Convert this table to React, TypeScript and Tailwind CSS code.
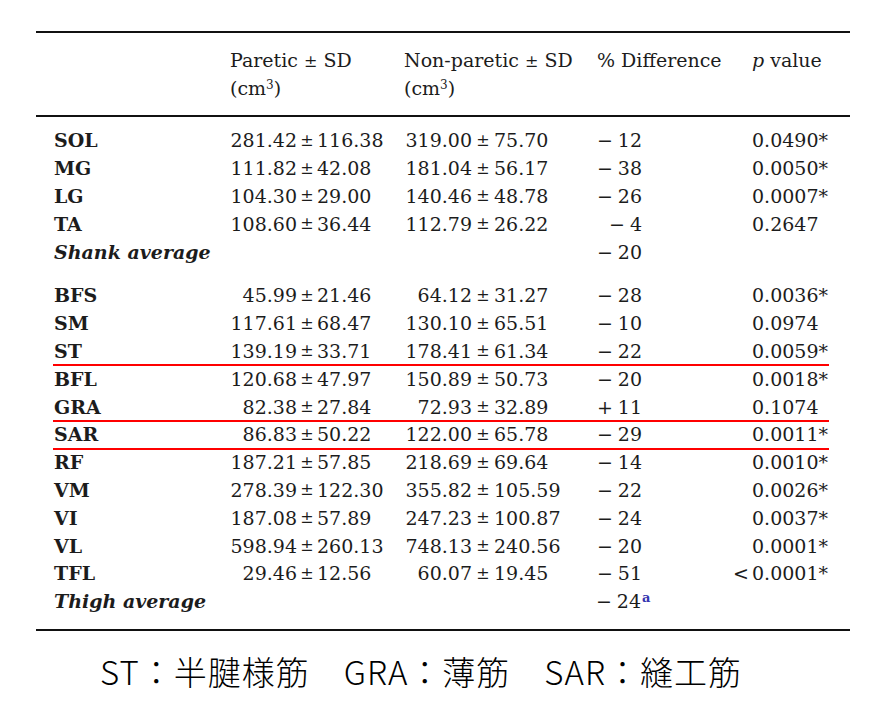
import React from "react";

type Row = {
  label: string;
  italic?: boolean;
  p?: [string, string];
  n?: [string, string];
  diff?: string;
  sup?: string;
  pv?: string;
  lt?: boolean;
};

const group1: Row[] = [
  { label: "SOL", p: ["281.42", "116.38"], n: ["319.00", "75.70"], diff: "−12", pv: "0.0490*" },
  { label: "MG", p: ["111.82", "42.08"], n: ["181.04", "56.17"], diff: "−38", pv: "0.0050*" },
  { label: "LG", p: ["104.30", "29.00"], n: ["140.46", "48.78"], diff: "−26", pv: "0.0007*" },
  { label: "TA", p: ["108.60", "36.44"], n: ["112.79", "26.22"], diff: "−4", pv: "0.2647" },
  { label: "Shank average", italic: true, diff: "−20" },
];

const groupA: Row[] = [
  { label: "BFS", p: ["45.99", "21.46"], n: ["64.12", "31.27"], diff: "−28", pv: "0.0036*" },
  { label: "SM", p: ["117.61", "68.47"], n: ["130.10", "65.51"], diff: "−10", pv: "0.0974" },
  { label: "ST", p: ["139.19", "33.71"], n: ["178.41", "61.34"], diff: "−22", pv: "0.0059*" },
];
const groupB: Row[] = [
  { label: "BFL", p: ["120.68", "47.97"], n: ["150.89", "50.73"], diff: "−20", pv: "0.0018*" },
  { label: "GRA", p: ["82.38", "27.84"], n: ["72.93", "32.89"], diff: "+11", pv: "0.1074" },
];
const groupC: Row[] = [
  { label: "SAR", p: ["86.83", "50.22"], n: ["122.00", "65.78"], diff: "−29", pv: "0.0011*" },
];
const groupD: Row[] = [
  { label: "RF", p: ["187.21", "57.85"], n: ["218.69", "69.64"], diff: "−14", pv: "0.0010*" },
  { label: "VM", p: ["278.39", "122.30"], n: ["355.82", "105.59"], diff: "−22", pv: "0.0026*" },
  { label: "VI", p: ["187.08", "57.89"], n: ["247.23", "100.87"], diff: "−24", pv: "0.0037*" },
  { label: "VL", p: ["598.94", "260.13"], n: ["748.13", "240.56"], diff: "−20", pv: "0.0001*" },
  { label: "TFL", p: ["29.46", "12.56"], n: ["60.07", "19.45"], diff: "−51", pv: "0.0001*", lt: true },
  { label: "Thigh average", italic: true, diff: "−24", sup: "a" },
];

function Diff({ v, sup }: { v: string; sup?: string }) {
  const sign = v.charAt(0);
  const num = v.slice(1);
  return (
    <div className="w-[62px] shrink-0 flex justify-end items-baseline whitespace-nowrap">
      <span>{sign}</span>
      <span className="ml-[5px]">{num}</span>
      {sup && (
        <sup className="text-[13px] text-[#3535b0] font-bold -mr-[10px] w-[10px] ml-[1px]">{sup}</sup>
      )}
    </div>
  );
}

function DataRow({ r }: { r: Row }) {
  return (
    <div className="flex items-center h-[27.8px] whitespace-nowrap">
      <div
        className={
          "w-[164px] shrink-0 pl-[18px] font-bold " + (r.italic ? "italic" : "")
        }
      >
        {r.label}
      </div>
      <div className="w-[97px] shrink-0 text-right">{r.p ? r.p[0] : ""}</div>
      <div className="w-[20px] shrink-0 text-center text-[16px]">{r.p ? "±" : ""}</div>
      <div className="w-[83px] shrink-0">{r.p ? r.p[1] : ""}</div>
      <div className="w-[72px] shrink-0 text-right">{r.n ? r.n[0] : ""}</div>
      <div className="w-[22px] shrink-0 text-center text-[16px]">{r.n ? "±" : ""}</div>
      <div className="w-[86px] shrink-0">{r.n ? r.n[1] : ""}</div>
      {r.diff ? <Diff v={r.diff} sup={r.sup} /> : <div className="w-[62px] shrink-0" />}
      <div className="w-[86px] shrink-0" />
      <div className="w-[24px] shrink-0 text-right pr-[3px]">{r.lt ? "<" : ""}</div>
      <div className="w-[98px] shrink-0">{r.pv ?? ""}</div>
    </div>
  );
}

function RedLine() {
  return <div className="h-[2px] -my-px ml-[17px] w-[776px] bg-[#ff0000] relative" />;
}

export default function App() {
  return (
    <div
      className="w-[891px] h-[711px] bg-white text-[#1c1c1c] text-[19px] leading-none"
      style={{ fontFamily: '"DejaVu Serif", serif' }}
    >
      <div className="pt-[31px] ml-[36px] w-[814px]">
        <div className="h-[2px] bg-[#111]" />
        <div className="flex pt-[13px] pb-[13px] leading-[28px] whitespace-nowrap">
          <div className="w-[194px] shrink-0" />
          <div className="w-[174px] shrink-0">
            <div className="h-[28px]">
              Paretic <span className="text-[16px] leading-none">±</span> SD
            </div>
            <div className="h-[28px]">
              (cm<sup className="text-[12px]">3</sup>)
            </div>
          </div>
          <div className="w-[193px] shrink-0">
            <div className="h-[28px]">
              Non-paretic <span className="text-[16px] leading-none">±</span> SD
            </div>
            <div className="h-[28px]">
              (cm<sup className="text-[12px]">3</sup>)
            </div>
          </div>
          <div className="w-[155px] shrink-0">% Difference</div>
          <div className="w-[98px] shrink-0">
            <span className="italic">p</span> value
          </div>
        </div>
        <div className="h-[2px] bg-[#111]" />
        <div className="pt-[10px]">
          {group1.map((r) => (
            <DataRow key={r.label} r={r} />
          ))}
        </div>
        <div className="pt-[16px] pb-[13px]">
          {groupA.map((r) => (
            <DataRow key={r.label} r={r} />
          ))}
          <RedLine />
          {groupB.map((r) => (
            <DataRow key={r.label} r={r} />
          ))}
          <RedLine />
          {groupC.map((r) => (
            <DataRow key={r.label} r={r} />
          ))}
          <RedLine />
          {groupD.map((r) => (
            <DataRow key={r.label} r={r} />
          ))}
        </div>
        <div className="h-[2px] bg-[#111]" />
      </div>
      <div
        className="pl-[100px] pt-[20px] text-[33px] font-extralight tracking-[1px] text-black leading-[40px] whitespace-nowrap"
        style={{ fontFamily: '"Noto Sans CJK JP", "Noto Sans", sans-serif' }}
      >
        ST：半腱様筋　GRA：薄筋　SAR：縫工筋
      </div>
    </div>
  );
}
